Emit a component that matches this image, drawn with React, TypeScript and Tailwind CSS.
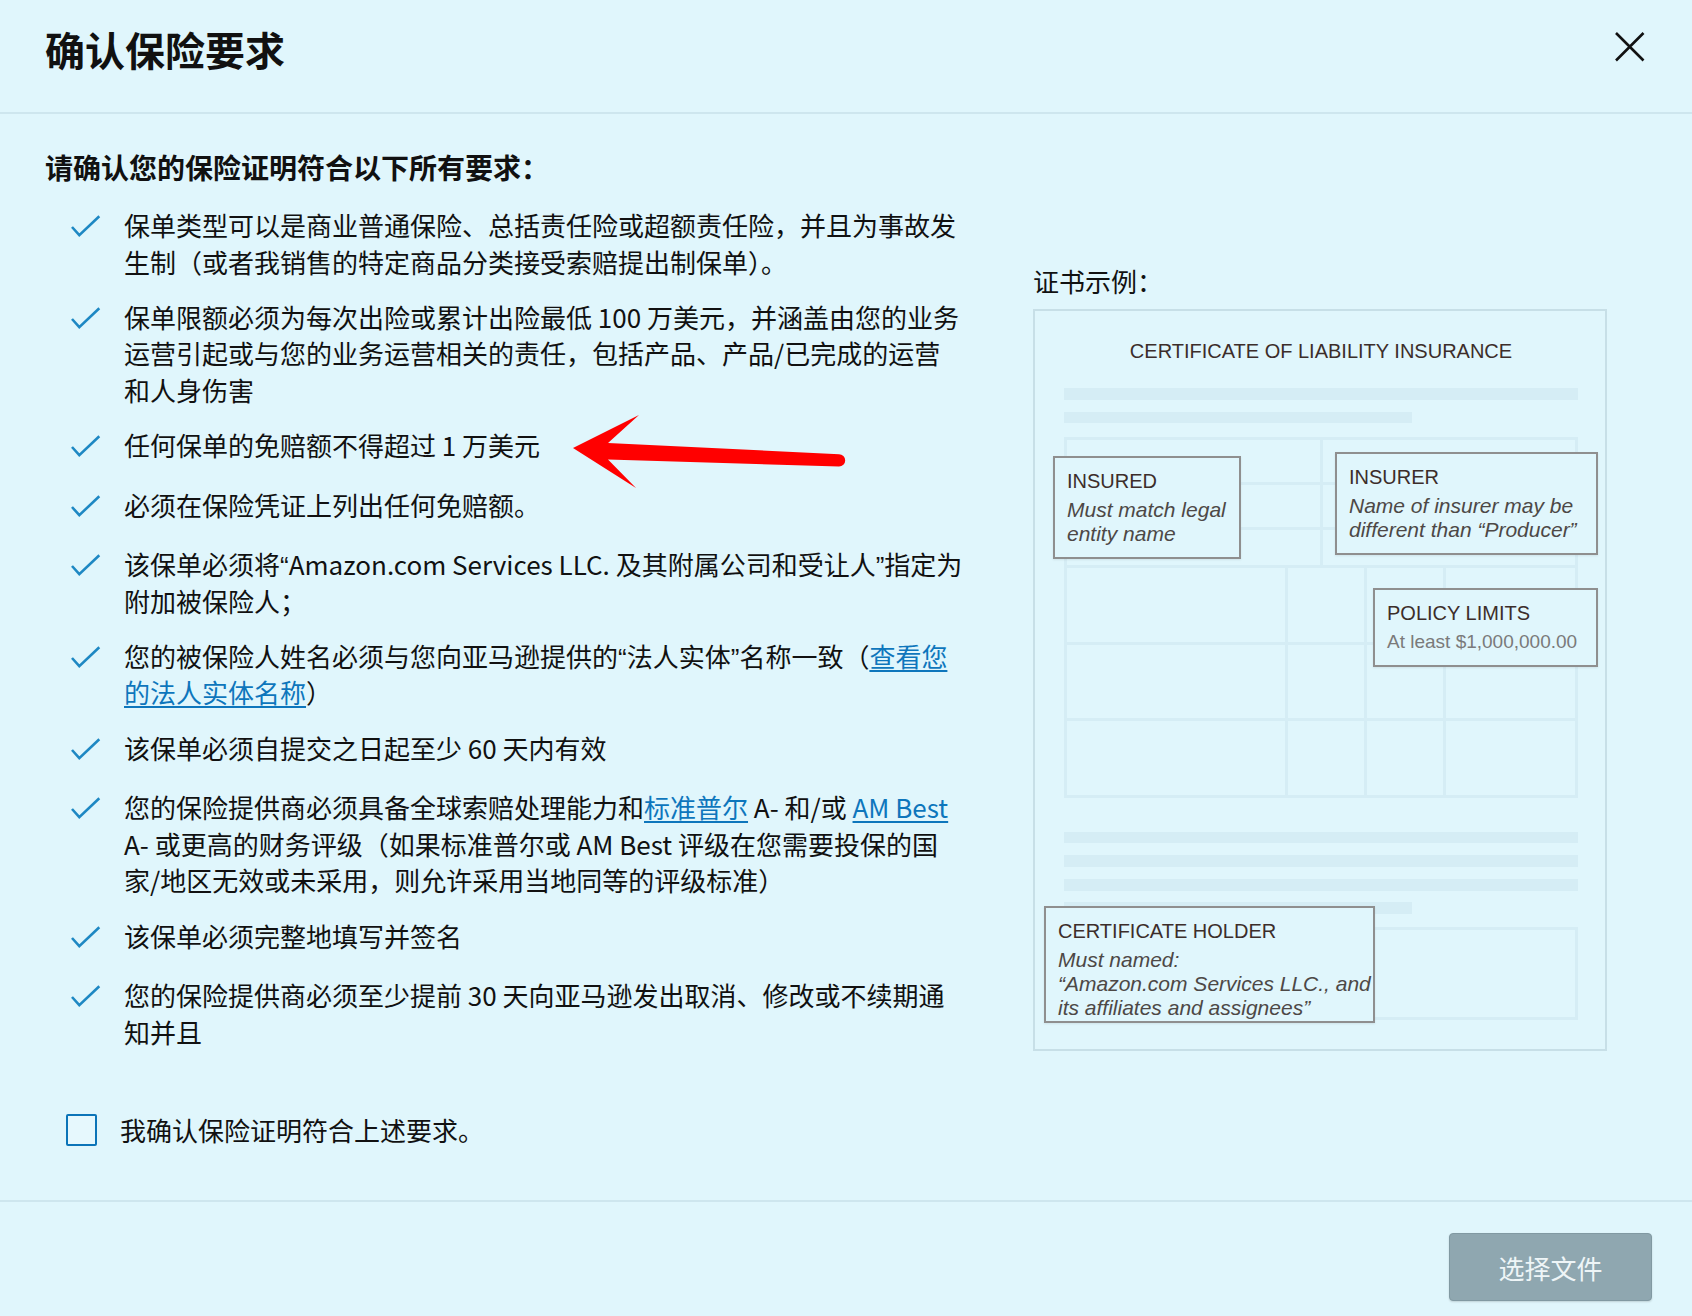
import type { ReactNode } from 'react'

const LINE = 'bg-[#d5edf5]'

function Check() {
  return (
    <svg width="31" height="41" viewBox="0 0 31 41" fill="none" className="shrink-0">
      <polyline points="2,20 9.3,28.2 29.3,9.2" stroke="#1e88c3" strokeWidth="2.6" />
    </svg>
  )
}

function A({ children }: { children: ReactNode }) {
  return <a className="text-[#0e76bc] underline decoration-[1.5px] underline-offset-[3px] cursor-pointer">{children}</a>
}

// narrow latin quote marks, as in the original
function Q({ children }: { children: ReactNode }) {
  return <span className="font-['Liberation_Sans',sans-serif] leading-none">{children}</span>
}

function Item({ children }: { children: ReactNode }) {
  return (
    <li className="flex items-start gap-[23px]">
      <div className="h-[41px] w-[31px] shrink-0">
        <Check />
      </div>
      <div className="whitespace-nowrap text-[26px] leading-[36.5px]">{children}</div>
    </li>
  )
}

function Note({ className, title, children }: { className: string; title: string; children: ReactNode }) {
  return (
    <div
      className={`absolute overflow-hidden whitespace-nowrap border-2 border-[#8f8f8f] bg-[#e0f6fc] px-[12px] pt-[11px] font-['Liberation_Sans',sans-serif] shadow-[0_1px_2px_rgba(0,0,0,0.08)] ${className}`}
    >
      <div className="text-[20px] leading-[24px] text-[#3c2d2a]">{title}</div>
      <div className="mt-[5px]">{children}</div>
    </div>
  )
}

function Certificate() {
  return (
    <div className="relative mt-[10px] h-[742px] w-[574px] border-2 border-[#c7dfe7] pl-[29px] pt-[28px]">
      <div className="w-[514px] text-center font-['Liberation_Sans',sans-serif] text-[20px] leading-[24px] text-[#3c2d2a]">
        CERTIFICATE OF LIABILITY INSURANCE
      </div>
      <div className={`mt-[25px] h-[12px] w-[514px] ${LINE}`} />
      <div className={`mt-[12px] h-[11px] w-[348px] ${LINE}`} />

      <div className={`mt-[14px] grid w-[514px] grid-cols-[253px_252px] grid-rows-[42px_42px_35px] gap-[3px] p-[3px] pb-0 ${LINE}`}>
        {Array.from({ length: 6 }).map((_, i) => (
          <div key={i} className="bg-[#e0f6fc]" />
        ))}
      </div>
      <div className={`grid w-[514px] grid-cols-[218px_76px_76px_129px] grid-rows-[74px_73px_74px] gap-[3px] p-[3px] ${LINE}`}>
        {Array.from({ length: 12 }).map((_, i) => (
          <div key={i} className="bg-[#e0f6fc]" />
        ))}
      </div>

      <div className={`mt-[34px] h-[11px] w-[514px] ${LINE}`} />
      <div className={`mt-[12px] h-[12px] w-[514px] ${LINE}`} />
      <div className={`mt-[12px] h-[12px] w-[514px] ${LINE}`} />
      <div className={`mt-[11px] h-[12px] w-[348px] ${LINE}`} />
      <div className="mt-[13px] h-[93px] w-[514px] border-[3px] border-[#d5edf5]" />

      <Note className="left-[18px] top-[145px] h-[103px] w-[188px]" title="INSURED">
        <div className="text-[21px] italic leading-[23.5px] text-[#4d4846]">
          Must match legal
          <br />
          entity name
        </div>
      </Note>
      <Note className="left-[300px] top-[141px] h-[103px] w-[263px]" title="INSURER">
        <div className="text-[21px] italic leading-[23.5px] text-[#4d4846]">
          Name of insurer may be
          <br />
          different than “Producer”
        </div>
      </Note>
      <Note className="left-[338px] top-[277px] h-[79px] w-[225px]" title="POLICY LIMITS">
        <div className="text-[19px] leading-[23.5px] text-[#7a7a7a]">At least $1,000,000.00</div>
      </Note>
      <Note className="left-[9px] top-[595px] h-[117px] w-[331px]" title="CERTIFICATE HOLDER">
        <div className="text-[21px] italic leading-[24px] text-[#4d4846]">
          Must named:
          <br />
          “Amazon.com Services LLC., and
          <br />
          its affiliates and assignees”
        </div>
      </Note>
    </div>
  )
}

export default function App() {
  return (
    <div className="relative flex h-[1316px] w-full flex-col overflow-hidden bg-[#e0f6fc] font-['Noto_Sans_CJK_SC',sans-serif] text-[#111]">
      {/* Header */}
      <header className="flex h-[114px] shrink-0 items-start justify-between border-b-2 border-[#cee6ee] pl-[45px] pr-[47px]">
        <h1 className="pt-[25px] text-[40px] font-bold leading-[48px]">确认保险要求</h1>
        <button type="button" className="mt-[31px] h-[31px] w-[31px]">
          <svg width="31" height="31" viewBox="0 0 31 31" fill="none">
            <path d="M2 2 L29.5 29.5 M29.5 2 L2 29.5" stroke="#111" strokeWidth="2.6" />
          </svg>
        </button>
      </header>

      {/* Body */}
      <div className="flex flex-1">
        <div className="w-[1033px] shrink-0 pl-[45px] pt-[33px]">
          <p className="text-[28px] font-bold leading-[40px]">请确认您的保险证明符合以下所有要求：</p>
          <ul className="ml-[25px] mt-[20px] flex flex-col gap-[18.7px]">
            <Item>
              保单类型可以是商业普通保险、总括责任险或超额责任险，并且为事故发
              <br />
              生制（或者我销售的特定商品分类接受索赔提出制保单）。
            </Item>
            <Item>
              保单限额必须为每次出险或累计出险最低 100 万美元，并涵盖由您的业务
              <br />
              运营引起或与您的业务运营相关的责任，包括产品、产品/已完成的运营
              <br />
              和人身伤害
            </Item>
            <Item>任何保单的免赔额不得超过 1 万美元</Item>
            <Item>必须在保险凭证上列出任何免赔额。</Item>
            <Item>
              该保单必须将<Q>“</Q>Amazon.com Services LLC. 及其附属公司和受让人<Q>”</Q>指定为
              <br />
              附加被保险人；
            </Item>
            <Item>
              您的被保险人姓名必须与您向亚马逊提供的<Q>“</Q>法人实体<Q>”</Q>名称一致（<A>查看您</A>
              <br />
              <A>的法人实体名称</A>）
            </Item>
            <Item>该保单必须自提交之日起至少 60 天内有效</Item>
            <Item>
              您的保险提供商必须具备全球索赔处理能力和<A>标准普尔</A> A- 和/或 <A>AM Best</A>
              <br />
              A- 或更高的财务评级（如果标准普尔或 AM Best 评级在您需要投保的国
              <br />
              家/地区无效或未采用，则允许采用当地同等的评级标准）
            </Item>
            <Item>该保单必须完整地填写并签名</Item>
            <Item>
              您的保险提供商必须至少提前 30 天向亚马逊发出取消、修改或不续期通
              <br />
              知并且
            </Item>
          </ul>

          <label className="ml-[21px] mt-[62px] flex items-center gap-[23px]">
            <span className="h-[32px] w-[31px] shrink-0 rounded-[2px] border-2 border-[#0b74b8] bg-[#e6f8fd]" />
            <span className="text-[26px] leading-[36px]">我确认保险证明符合上述要求。</span>
          </label>
        </div>

        <div className="pt-[149px]">
          <p className="text-[26px] leading-[36px]">证书示例：</p>
          <Certificate />
        </div>
      </div>

      {/* Footer */}
      <footer className="flex h-[116px] shrink-0 items-start justify-end border-t-2 border-[#cee6ee] pr-[40px] pt-[31px]">
        <button
          type="button"
          className="h-[68px] w-[203px] rounded-[4px] border border-[#8199a2] bg-[#8fa7b0] text-[26px] text-[#eef5f7] shadow-[0_1px_2px_rgba(0,0,0,0.15)]"
        >
          选择文件
        </button>
      </footer>

      {/* Red annotation arrow */}
      <svg className="pointer-events-none absolute left-[560px] top-[405px]" width="300" height="100" viewBox="0 0 300 100">
        <path d="M13 43 L79 10 L48 38 L279 49.2 A6.2 6.2 0 0 1 279 61.6 L48 54.5 L76 83 Z" fill="#ff0000" />
      </svg>
    </div>
  )
}
